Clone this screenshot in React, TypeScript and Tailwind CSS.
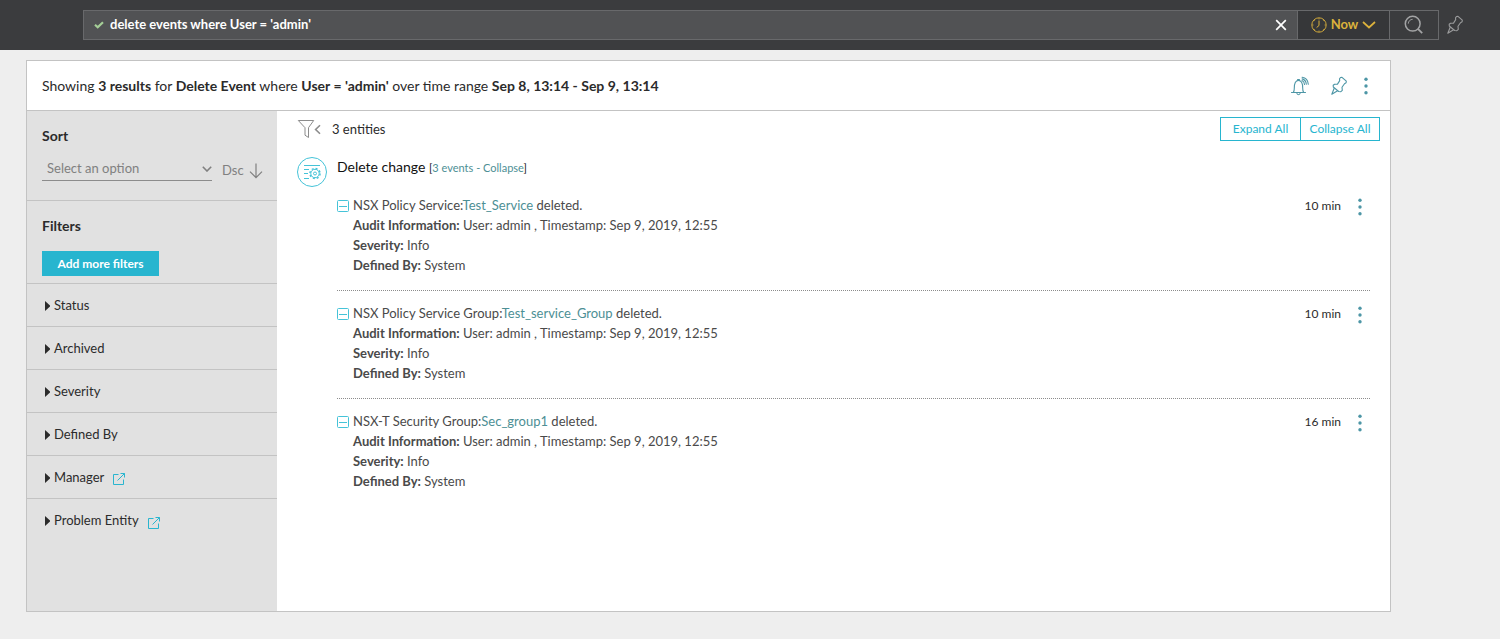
import { useState } from 'react'

type EventItem = {
  id: number
  kind: string
  entity: string
  age: string
}

const EVENTS: EventItem[] = [
  { id: 1, kind: 'NSX Policy Service:', entity: 'Test_Service', age: '10 min' },
  { id: 2, kind: 'NSX Policy Service Group:', entity: 'Test_service_Group', age: '10 min' },
  { id: 3, kind: 'NSX-T Security Group:', entity: 'Sec_group1', age: '16 min' },
]

const FILTERS = [
  { label: 'Status', external: false },
  { label: 'Archived', external: false },
  { label: 'Severity', external: false },
  { label: 'Defined By', external: false },
  { label: 'Manager', external: true },
  { label: 'Problem Entity', external: true },
]

function PinIcon({ className }: { className?: string }) {
  return (
    <svg viewBox="0 0 18 20" width="18" height="20" fill="none" stroke="currentColor" strokeWidth="1.1" strokeLinejoin="round" className={className}>
      <path d="M10.5 1.500 12 1.300 16.300 5.200 16.100 6.800 14.500 7.700 12 11.300 12.300 14.400 10.900 15.700 8.700 15.500 3.300 11 3.200 9.300 4.600 8.200 7.500 8.100 9.700 4.600 9.500 2.800Z" />
      <path d="M4.300 12 1.800 18.200 7.600 14.700" />
    </svg>
  )
}

function BellIcon() {
  return (
    <svg viewBox="0 0 20 20" width="20" height="20" fill="none" stroke="currentColor" strokeWidth="1.1" strokeLinecap="round">
      <path d="M1.500 16.500h14M3.400 16.300c.8-1 .9-2.300.9-4.300C4.300 7.300 5.500 4.500 8.500 4.500s4.200 2.800 4.200 7.500c0 2 .1 3.300.9 4.300" />
      <path d="M7.700 4.400V3.500h1.600v.9M6.800 17c.2 1.200.8 1.700 1.700 1.700s1.500-.5 1.700-1.700" />
      <path d="M12 4.500c1.500.6 2.400 1.900 2.500 4M12.100 2.900c2.400.6 4 2.500 4.200 5.400M12.100 1.200c3.500.5 5.900 3 6.200 7" />
    </svg>
  )
}

function ClockIcon() {
  return (
    <svg viewBox="0 0 16 16" width="16" height="16" fill="none" stroke="currentColor">
      <circle cx="8" cy="8" r="7.2" strokeWidth="0.9" />
      <path d="M8 3.500v5L5.600 10.600" />
      <path d="M8 1v1.500M8 13.500V15M1 8h1.500M13.500 8H15M3.100 3.100l.8.8M12.100 12.100l.8.8M12.900 3.100l-.8.8M3.900 12.100l-.8.8" strokeWidth="0.700" />
    </svg>
  )
}

function SearchIcon() {
  return (
    <svg viewBox="0 0 20 20" width="20" height="20" fill="none" stroke="currentColor">
      <circle cx="8.700" cy="8.700" r="7.400" strokeWidth="1.500" />
      <path d="M4.300 8.700a4.400 4.400 0 0 1 4.400-4.400" strokeWidth="0.900" />
      <path d="M13.900 13.900l4.300 4.300" strokeWidth="1.800" />
    </svg>
  )
}

function FunnelIcon() {
  return (
    <svg viewBox="0 0 24 20" width="24" height="20" fill="none" stroke="#8c8c8c">
      <path d="M1.300 1.500h15.400L11.500 8.700V18.500L8 16.200V8.700Z" />
      <path d="M23 6.200 18.600 10.500 23 14.800" strokeWidth="1.600" />
    </svg>
  )
}

function ChangeIcon() {
  return (
    <svg viewBox="0 0 30 30" width="30" height="30" fill="none" stroke="#45c3d8" className="shrink-0">
      <circle cx="15" cy="15" r="14.500" />
      <path d="M7 8.500h16M7 12.500h5M7 16.500h4M7 21.500h5" />
      <circle cx="18" cy="16.500" r="4.200" />
      <circle cx="18" cy="16.500" r="5.100" strokeWidth="1.400" strokeDasharray="2 2" />
      <circle cx="18" cy="16.500" r="1.500" />
    </svg>
  )
}

function ExternalIcon() {
  return (
    <svg viewBox="0 0 14 14" width="14" height="14" fill="none" stroke="#29b5cf">
      <path d="M6.500 2.500h-5v10h10v-5M5.500 8.500l7-7M8.500 1.500h4v4" />
    </svg>
  )
}

function DotsIcon() {
  return (
    <svg viewBox="0 0 4 18" width="4" height="18" fill="#4d96a6">
      <circle cx="2" cy="2.200" r="1.700" />
      <circle cx="2" cy="9" r="1.700" />
      <circle cx="2" cy="15.800" r="1.700" />
    </svg>
  )
}

function TopBar() {
  return (
    <header className="flex h-[50px] items-center bg-[#3b3c3e] pr-9 pl-[83px]">
      <div className="flex h-[30px] flex-1 items-center border border-[#68696b] bg-[#515254] pr-2 pl-[10px]">
        <svg viewBox="0 0 10 8" width="10" height="8" fill="none" stroke="#a5cf97" strokeWidth="2.200">
          <path d="M1 3.800 3.700 6.300 9 1.200" />
        </svg>
        <input
          type="text"
          aria-label="Search query"
          defaultValue="delete events where User = 'admin'"
          className="ml-[6px] min-w-0 flex-1 bg-transparent text-[13px] font-bold text-white outline-none"
        />
        <button aria-label="Clear search" className="flex size-4 items-center justify-center text-white">
          <svg viewBox="0 0 12 12" width="12" height="12" stroke="currentColor" strokeWidth="1.700">
            <path d="M1.200 1.200 10.800 10.800M10.800 1.200 1.200 10.800" />
          </svg>
        </button>
      </div>
      <button className="flex h-[30px] w-[91px] items-center justify-center gap-1 border-y border-[#68696b] bg-[#363739] text-[13px] font-bold text-[#dcb23c]">
        <ClockIcon />
        Now
        <svg viewBox="0 0 14 8" width="14" height="8" fill="none" stroke="currentColor" strokeWidth="1.700">
          <path d="M1 1l6 5.500L13 1" />
        </svg>
      </button>
      <button aria-label="Search" className="flex h-[30px] w-[50px] items-center justify-center border border-[#68696b] text-[#a3a4a5]">
        <SearchIcon />
      </button>
      <button aria-label="Pin search" className="ml-[7px] text-[#9a9b9c]">
        <PinIcon />
      </button>
    </header>
  )
}

function Sidebar() {
  return (
    <aside className="w-[250px] shrink-0 bg-[#e1e1e1] text-[13px] text-[#2b2b2b]">
      <section className="h-[90px] border-b border-[#c3c3c3] px-[15px] pt-[15px]">
        <h2 className="text-sm leading-5 font-bold">Sort</h2>
        <div className="mt-[11px] flex text-[#808080]">
          <div className="relative h-6 w-[170px] shrink-0 border-b border-[#8c8c8c]">
            <select aria-label="Sort by" defaultValue="" className="h-[23px] w-full appearance-none bg-transparent pl-[5px] outline-none">
              <option value="">Select an option</option>
            </select>
            <svg viewBox="0 0 10 6" width="10" height="6" fill="none" stroke="#808080" strokeWidth="1.600" className="pointer-events-none absolute top-[9px] right-0">
              <path d="M.8.8 5 5 9.200.8" />
            </svg>
          </div>
          <button className="ml-[10px] flex h-[28px] items-center gap-[5px]">
            Dsc
            <svg viewBox="0 0 14 16" width="14" height="16" fill="none" stroke="currentColor" strokeWidth="1.200" className="shrink-0">
              <path d="M7 .5v14M1 8.700l6 6 6-6" />
            </svg>
          </button>
        </div>
      </section>

      <section className="h-[83px] border-b border-[#c3c3c3] px-[15px] pt-[15px]">
        <h2 className="text-sm leading-5 font-bold">Filters</h2>
        <button className="mt-[15px] h-[25px] w-[117px] bg-[#27b5cf] text-xs font-bold text-white">Add more filters</button>
      </section>

      <ul className="divide-y divide-[#c3c3c3]">
        {FILTERS.map(f => (
          <li key={f.label} className="flex h-[43px] items-center pt-px pl-[18px]">
            <button className="flex items-center gap-1">
              <svg viewBox="0 0 5 10" width="5" height="10" fill="#2b2b2b">
                <path d="M0 0 5.500 5 0 10Z" />
              </svg>
              {f.label}
            </button>
            {f.external && (
              <a href="#" aria-label={`Open ${f.label}`} className="mt-[3px] ml-2">
                <ExternalIcon />
              </a>
            )}
          </li>
        ))}
      </ul>
    </aside>
  )
}

function EventRow({ event, open, onToggle }: { event: EventItem; open: boolean; onToggle: () => void }) {
  return (
    <li className="flex items-start pt-3 pb-[15px] text-[13px] leading-5 text-[#4a4a4a]">
      <button aria-label={`Toggle ${event.entity}`} onClick={onToggle} className="flex h-5 items-center pt-[2px]">
        <svg viewBox="0 0 12 12" width="12" height="12" fill="none" stroke="#45c3d8">
          <rect x=".5" y=".5" width="11" height="11" rx="1" />
          <path d={open ? 'M2 6.500h8' : 'M2 6.500h8M6 2.500v8'} />
        </svg>
      </button>
      <div className="ml-1 flex-1">
        <p>
          {event.kind}
          <a href="#" className="text-[#4d8f95]">{event.entity}</a> deleted.
        </p>
        {open && (
          <>
            <p><b>Audit Information:</b> User: admin , Timestamp: Sep 9, 2019, 12:55</p>
            <p><b>Severity:</b> Info</p>
            <p><b>Defined By:</b> System</p>
          </>
        )}
      </div>
      <span className="mt-px text-xs leading-5 text-[#2b2b2b]">{event.age}</span>
      <button aria-label="Event actions" className="mt-[3px] mr-[7px] ml-4 flex w-[6px] justify-center">
        <DotsIcon />
      </button>
    </li>
  )
}

export default function App() {
  const [openIds, setOpenIds] = useState<number[]>(EVENTS.map(e => e.id))

  function toggle(id: number) {
    setOpenIds(prev => (prev.includes(id) ? prev.filter(i => i !== id) : [...prev, id]))
  }

  return (
    <div className="min-h-screen bg-[#eeeeee] font-['Lato',sans-serif]">
      <TopBar />
      <main className="mt-[10px] mr-[109px] mb-[27px] ml-[26px] border border-[#c3c3c3] bg-white">
        <div className="flex h-[50px] items-center border-b border-[#c3c3c3] pr-[22px] pl-[15px] text-[#2b2b2b]">
          <h1 className="flex-1 text-sm">
            Showing <b>3 results</b> for <b>Delete Event</b> where <b>User = 'admin'</b> over time range{' '}
            <b>Sep 8, 13:14 - Sep 9, 13:14</b>
          </h1>
          <div className="flex items-center text-[#4d96a6]">
            <button aria-label="Create alert"><BellIcon /></button>
            <button aria-label="Pin results" className="mr-4 ml-5"><PinIcon /></button>
            <button aria-label="More actions"><DotsIcon /></button>
          </div>
        </div>

        <div className="flex min-h-[500px]">
          <Sidebar />
          <section className="flex-1 px-5">
            <div className="-mr-[10px] flex items-center pt-[6px]">
              <button aria-label="Hide filters">
                <FunnelIcon />
              </button>
              <span className="mt-px ml-[11px] flex-1 text-[13px] text-[#2b2b2b]">3 entities</span>
              <div className="flex h-6 border border-[#27b5cf] text-xs text-[#27b5cf]">
                <button onClick={() => setOpenIds(EVENTS.map(e => e.id))} className="w-[79px]">Expand All</button>
                <button onClick={() => setOpenIds([])} className="w-[79px] border-l border-[#27b5cf]">Collapse All</button>
              </div>
            </div>

            <div className="mt-4 flex">
              <ChangeIcon />
              <div className="ml-[10px] flex-1">
                <h2 className="h-[28px] text-sm leading-5 text-[#111111]">
                  Delete change{' '}
                  <span className="text-[11px]">
                    [<a href="#" className="text-[#4d8f95]">3 events - Collapse</a>]
                  </span>
                </h2>
                <ul className="-mt-[2px] divide-y divide-dotted divide-[#8c8c8c]">
                  {EVENTS.map(e => (
                    <EventRow key={e.id} event={e} open={openIds.includes(e.id)} onToggle={() => toggle(e.id)} />
                  ))}
                </ul>
              </div>
            </div>
          </section>
        </div>
      </main>
    </div>
  )
}
